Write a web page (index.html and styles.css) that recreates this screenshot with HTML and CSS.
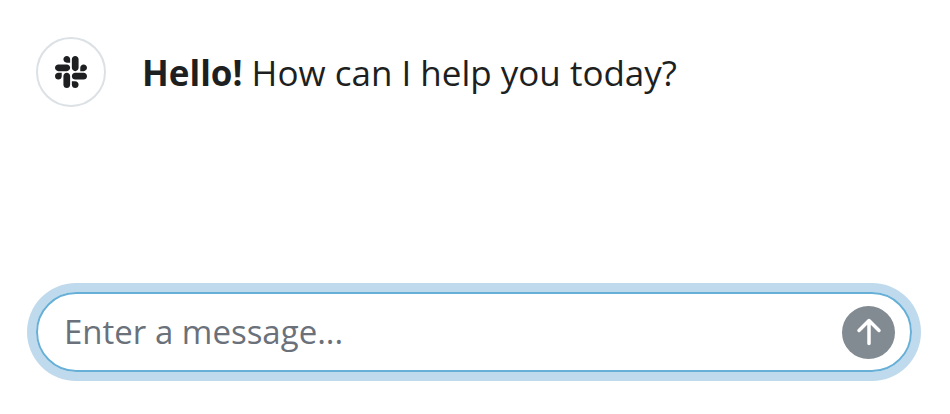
FILE: index.html
```html
<!DOCTYPE html>
<html lang="en">
<head>
  <meta charset="utf-8">
  <meta name="viewport" content="width=device-width, initial-scale=1">
  <title>Chat</title>
  <link rel="stylesheet" href="styles.css">
</head>
<body>
  <main class="chat">
    <div class="message">
      <div class="avatar">
        <svg class="avatar-icon" viewBox="0 32 448 448" aria-hidden="true">
          <path d="M94.12 315.1c0 25.9-21.16 47.06-47.06 47.06S0 341 0 315.1c0-25.9 21.16-47.06 47.06-47.06h47.06v47.06zm23.72 0c0-25.9 21.16-47.06 47.06-47.06s47.06 21.16 47.06 47.06v117.84c0 25.9-21.16 47.06-47.06 47.06s-47.06-21.16-47.06-47.06V315.1zm47.06-188.98c-25.9 0-47.06-21.16-47.06-47.06S139 32 164.9 32s47.06 21.16 47.06 47.06v47.06H164.9zm0 23.72c25.9 0 47.06 21.16 47.06 47.06s-21.16 47.06-47.06 47.06H47.06C21.16 243.96 0 222.8 0 196.9s21.16-47.06 47.06-47.06H164.9zm188.98 47.06c0-25.9 21.16-47.06 47.06-47.06 25.9 0 47.06 21.16 47.06 47.06s-21.16 47.06-47.06 47.06h-47.06V196.9zm-23.72 0c0 25.9-21.16 47.06-47.06 47.06-25.9 0-47.06-21.16-47.06-47.06V79.06c0-25.9 21.16-47.06 47.06-47.06 25.9 0 47.06 21.16 47.06 47.06V196.9zM283.1 385.88c25.9 0 47.06 21.16 47.06 47.06 0 25.9-21.16 47.06-47.06 47.06-25.9 0-47.06-21.16-47.06-47.06v-47.06h47.06zm0-23.72c-25.9 0-47.06-21.16-47.06-47.06 0-25.9 21.16-47.06 47.06-47.06h117.84c25.9 0 47.06 21.16 47.06 47.06 0 25.9-21.16 47.06-47.06 47.06H283.1z"/>
        </svg>
      </div>
      <p class="message-text"><strong>Hello!</strong> How can I help you today?</p>
    </div>
    <form class="composer">
      <input class="composer-input" type="text" placeholder="Enter a message..." aria-label="Message">
      <button class="send" type="button" aria-label="Send message">
        <svg class="send-icon" viewBox="0 0 28 28" aria-hidden="true">
          <path d="M14 25.5V2.5M4 12.5L14 2.5L24 12.5"/>
        </svg>
      </button>
    </form>
  </main>
</body>
</html>
```

FILE: styles.css
```css
* {
  box-sizing: border-box;
}

body {
  margin: 0;
  background: #fff;
  color: #1d1f21;
  font-family: "Open Sans", sans-serif;
}

.chat {
  display: flex;
  flex-direction: column;
  justify-content: space-between;
  min-height: 100vh;
  padding: 37px 38px 42px 36px;
}

.message {
  display: flex;
  align-items: center;
  gap: 36px;
}

.avatar {
  display: flex;
  flex: none;
  align-items: center;
  justify-content: center;
  width: 70px;
  height: 70px;
  border: 2px solid #dce1e5;
  border-radius: 50%;
}

.avatar-icon {
  width: 32px;
  height: 32px;
  fill: #1d1f21;
}

.message-text {
  margin: 0;
  padding-top: 2px;
  font-size: 35px;
  line-height: 54px;
}

.composer {
  display: flex;
  align-items: center;
  height: 80px;
  padding: 0 15px 0 26px;
  border: 2px solid #66afd7;
  border-radius: 40px;
  box-shadow: 0 0 0 9px #c0daed;
}

.composer-input {
  flex: 1;
  min-width: 0;
  padding: 0;
  border: 0;
  outline: 0;
  background: none;
  color: #1d1f21;
  font: 33px/50px "Open Sans", sans-serif;
}

.composer-input::placeholder {
  color: #6a717a;
  opacity: 1;
}

.send {
  display: flex;
  flex: none;
  align-items: center;
  justify-content: center;
  width: 53px;
  height: 53px;
  padding: 0;
  border: 0;
  border-radius: 50%;
  background: #828a92;
}

.send-icon {
  width: 28px;
  height: 28px;
  fill: none;
  stroke: #fff;
  stroke-width: 3.5;
  stroke-linecap: round;
  stroke-linejoin: round;
}
```
